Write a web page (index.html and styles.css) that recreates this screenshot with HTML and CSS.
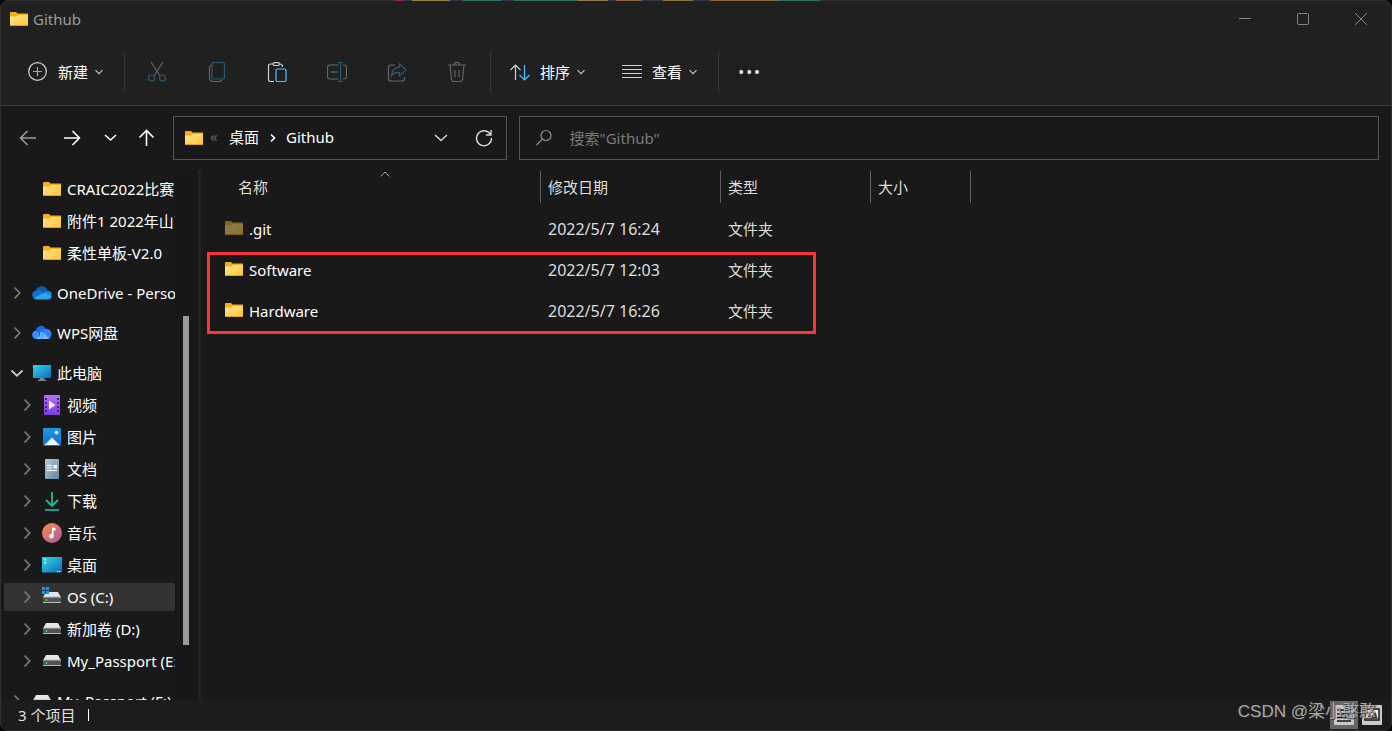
FILE: index.html
```html
<!DOCTYPE html>
<html lang="zh-CN">
<head>
<meta charset="utf-8">
<title>Github</title>
<link rel="stylesheet" href="styles.css">
</head>
<body>
<svg class="defs" aria-hidden="true">
  <defs>
    <linearGradient id="gFolder" x1="0" y1="0" x2="1" y2="1"><stop offset="0" stop-color="#ffe69a"/><stop offset="1" stop-color="#ffc42e"/></linearGradient>
    <linearGradient id="gScreen" x1="0" y1="0" x2="1" y2="1"><stop offset="0" stop-color="#35d6e0"/><stop offset="1" stop-color="#0a6cc0"/></linearGradient>
    <linearGradient id="gVideo" x1="0" y1="0" x2="0" y2="1"><stop offset="0" stop-color="#b473f5"/><stop offset="1" stop-color="#7f3ce0"/></linearGradient>
    <linearGradient id="gPic" x1="0" y1="0" x2="0" y2="1"><stop offset="0" stop-color="#1c9ae6"/><stop offset="1" stop-color="#0d6fc4"/></linearGradient>
    <linearGradient id="gDoc" x1="0" y1="0" x2="1" y2="1"><stop offset="0" stop-color="#b4cbdd"/><stop offset="1" stop-color="#66859f"/></linearGradient>
    <linearGradient id="gDown" x1="0" y1="0" x2="0" y2="1"><stop offset="0" stop-color="#2fc98c"/><stop offset="1" stop-color="#0fa89b"/></linearGradient>
    <linearGradient id="gMusic" x1="0" y1="0" x2="1" y2="1"><stop offset="0" stop-color="#f4904f"/><stop offset=".5" stop-color="#d97070"/><stop offset="1" stop-color="#9a5bb4"/></linearGradient>
    <linearGradient id="gWps" x1="0" y1="0" x2="0" y2="1"><stop offset="0" stop-color="#1668ee"/><stop offset="1" stop-color="#6dbcff"/></linearGradient>
    <symbol id="folder" viewBox="0 0 20 20"><path d="M1 4q0-1 1-1h5l1.500 1.500H19V8H1z" fill="#f9ae13"/><path d="M1 7.500h6.500l1.500-1.500H19v10.500H1z" fill="url(#gFolder)"/><path d="M1 16.500h18" stroke="#e3a21c"/></symbol>
    <symbol id="onedrive" viewBox="0 0 20 20"><path d="M4 8.500A5.800 5.800 0 0 1 15.500 8L11 13 4 10z" fill="#0a5fb5"/><path d="M4.500 7.500Q8 6.500 12 10l-2 6H4.500a4.250 4.250 0 0 1 0-8.500z" fill="#1273cf"/><path d="M11 10.500q2-3 5-2.500a4 4 0 0 1 3.800 4l-4 3z" fill="#168be0"/><path d="M1.500 15l10-4.800q1-.5 2 0l6.300 3.300q-1 3-3.800 3H5q-2 0-3.500-1.500z" fill="#28a8ea"/></symbol>
    <symbol id="wps" viewBox="0 0 20 20"><path d="M4 16A4.300 4.300 0 0 1 3.800 7.500 5.300 5.300 0 0 1 12.500 4L18 16z" fill="#1769f0"/><path d="M4 16A4.200 4.200 0 0 1 3 8q3-.5 4 2.500t-1.500 5.500z" fill="#3a91fa"/><path d="M12.500 6q6-1 7 4.500 0 5.500-5 5.500-2-6-5.500-7.500 1.500-2 3.500-2.500z" fill="#2e83f8"/><path d="M4 16q4-1 4.500-4.500T7.500 5.500Q13 6.500 14.500 12l2.500 4z" fill="url(#gWps)"/><path d="M5 15.500q4.500-1 4-6.500 4 3 5.500 7" fill="none" stroke="#bfe1ff" stroke-width=".7"/></symbol>
    <symbol id="pc" viewBox="0 0 20 20"><path d="M1 2h18v13H1z" fill="url(#gScreen)"/><path d="M8 15h4v1.500h2V18H6v-1.500h2z" fill="#788894"/></symbol>
    <symbol id="video" viewBox="0 0 20 20"><rect x="2" width="16" height="20" rx="1" fill="url(#gVideo)"/><path d="M4 3v15M16 3v15" stroke="#49208b" stroke-width="2" stroke-dasharray="2 2"/><path d="M7 5.500v9l6.500-4.500z" fill="#eee"/></symbol>
    <symbol id="picture" viewBox="0 0 20 20"><rect x="1" y="1" width="18" height="18" rx="1" fill="url(#gPic)"/><path d="M2.500 18L10 10.500 17.500 18z" fill="#f0f7fc"/><circle cx="14.500" cy="5.500" r="1.700" fill="#fff"/></symbol>
    <symbol id="doc" viewBox="0 0 20 20"><rect x="3" width="14" height="20" rx="1" fill="url(#gDoc)"/><path d="M5 6.500h5M5 9h5M5 11.500h10" stroke="#fff"/><rect x="11.500" y="6" width="3.500" height="3.500" fill="#fff"/></symbol>
    <symbol id="down" viewBox="0 0 20 20"><path d="M10 1v13M4 9l6 6 6-6" fill="none" stroke="#22bd8f" stroke-width="1.800"/><path d="M3 18.200h14v1.600H3z" fill="url(#gDown)"/></symbol>
    <symbol id="music" viewBox="0 0 20 20"><circle cx="10" cy="10" r="10" fill="url(#gMusic)"/><path d="M10 13V4.500l3.500.5v2.500l-2-.3V13" fill="#fff"/><circle cx="9.300" cy="13.300" r="2.200" fill="#fff"/></symbol>
    <symbol id="desk" viewBox="0 0 20 20"><path d="M0 2h20v15.500H0z" fill="url(#gScreen)"/><path d="M2.500 4h1.600v1.600H2.500zM2.500 7h1.600v1.600H2.500z" fill="#fff"/><path d="M15 16.500h1.200M17 16.500h1.200" stroke="#fff"/></symbol>
    <symbol id="drive" viewBox="0 0 20 20"><path d="M4 4h12l3 5.500H1z" fill="#e4e6e7"/><path d="M1 9h18v5.500H1z" fill="#505456"/><path d="M1 9h18M1 14.500h18" stroke="#b9bcbd"/><circle cx="4.500" cy="12" r="1" fill="#25e82d"/></symbol>
    <symbol id="osdrive" viewBox="0 0 20 20"><path d="M4 5h12l3 5.500H1z" fill="#e4e6e7"/><path d="M1 10h18v5.500H1z" fill="#505456"/><path d="M1 10h18M1 15.500h18" stroke="#b9bcbd"/><circle cx="4.500" cy="13" r="1" fill="#25e82d"/><path d="M0 0h7v7H0z" fill="#222"/><path d="M0 0h3.200v3.200H0zM3.900 0h3.200v3.200H3.900zM0 3.900h3.200v3.200H0zM3.900 3.900h3.200v3.200H3.900z" fill="#159be8"/></symbol>
    <symbol id="right" viewBox="0 0 20 20"><path d="M7.500 4.500L12.700 10l-5.200 5.500" fill="none" stroke="currentColor" stroke-width="1.800"/></symbol>
    <symbol id="open" viewBox="0 0 20 20"><path d="M4.500 7.500L10 12.700l5.500-5.200" fill="none" stroke="currentColor" stroke-width="1.800"/></symbol>
    <symbol id="small" viewBox="0 0 10 10"><path d="M1.500 3.200L5 6.700 8.500 3.200" fill="none" stroke="#c8c8c8" stroke-width="1.100"/></symbol>
  </defs>
</svg>
<div class="window">
  <header class="titlebar">
    <svg class="icon"><use href="#folder"/></svg>
    <h1 class="title">Github</h1>
    <div class="controls">
      <button class="control" aria-label="最小化"><svg class="ctl" viewBox="0 0 14 14"><path d="M1 6.500h12"/></svg></button>
      <button class="control" aria-label="最大化"><svg class="ctl" viewBox="0 0 14 14"><rect x="1.500" y="1.500" width="11" height="11" rx="1"/></svg></button>
      <button class="control" aria-label="关闭"><svg class="ctl" viewBox="0 0 14 14"><path d="M1 1l12 12M13 1L1 13"/></svg></button>
    </div>
  </header>
  <div class="toolbar">
    <button class="command"><svg class="icon line" viewBox="0 0 20 20"><circle cx="9.500" cy="9.500" r="8.800"/><path class="blue" d="M5 9.500h9M9.500 5v9"/></svg><span>新建</span><svg class="tiny"><use href="#small"/></svg></button>
    <span class="sep"></span>
    <div class="tools">
      <button class="tool" aria-label="剪切"><svg class="icon line dim" viewBox="0 0 20 20"><path d="M4 0l9 14M16 0L7 14"/><circle class="blue" cx="4.500" cy="16" r="3"/><circle class="blue" cx="15.500" cy="16" r="3"/></svg></button>
      <button class="tool" aria-label="复制"><svg class="icon line dim" viewBox="0 0 20 20"><path d="M4.500 3q-2 .5-2 2.500v10q0 4 4 4h5.500q2 0 2.500-1.500"/><rect class="blue" x="5" y=".5" width="12.500" height="16.500" rx="2"/></svg></button>
      <button class="tool" aria-label="粘贴"><svg class="icon line" viewBox="0 0 20 20"><path d="M6 2H3.500Q1.500 2 1.500 4v13.500q0 2 2 2H7M13 2q2.500 0 2.500 3"/><rect x="6" y=".7" width="6.500" height="2.800" rx="1.400"/><rect class="blue" x="9" y="7" width="10" height="12.500" rx="1.500"/></svg></button>
      <button class="tool" aria-label="重命名"><svg class="icon line dim" viewBox="0 0 20 20"><path d="M11 3H3Q.5 3 .5 5.500v9Q.5 17 3 17h8M16 3h1q2.500 0 2.500 2.500v9q0 2.500-2.500 2.500h-1"/><path class="blue" d="M13.500.5v19M10.500.5h5.500M10.500 19.500h5.500"/><path class="blue thick" d="M3.500 10h7"/></svg></button>
      <button class="tool" aria-label="共享"><svg class="icon line dim" viewBox="0 0 20 20"><path d="M8 3H4Q1.500 3 1.500 5.500v11Q1.500 19 4 19h11q2.500 0 2.500-2.500V15"/><path class="blue" d="M12.500 2l6.500 6-6.500 6v-3.500q-5-.5-8 3 .5-7.500 8-8.300z"/></svg></button>
      <button class="tool" aria-label="删除"><svg class="icon line dim" viewBox="0 0 20 20"><path d="M1 3h18M7 3q0-2.500 3-2.500T13 3M3 3l1.500 14.500q.3 2 2.200 2h6.600q1.900 0 2.200-2L17 3M8 8v7M12 8v7"/></svg></button>
    </div>
    <span class="sep"></span>
    <button class="command sort"><svg class="icon line" viewBox="0 0 20 20"><path d="M5.500 18V3M.5 8l5-5 5 5"/><path class="blue" d="M14.500 3v15M9.500 13l5 5 5-5"/></svg><span>排序</span><svg class="tiny"><use href="#small"/></svg></button>
    <button class="command view"><svg class="icon line" viewBox="0 0 20 20"><path d="M0 3.500h20M0 7.500h20M0 11.500h20M0 15.500h20"/></svg><span>查看</span><svg class="tiny"><use href="#small"/></svg></button>
    <span class="sep"></span>
    <button class="more" aria-label="更多"><svg class="icon" viewBox="0 0 20 20"><path d="M2.300 10h.01M10.300 10h.01M18 10h.01" stroke="#fff" stroke-width="4" stroke-linecap="round"/></svg></button>
  </div>
  <div class="location">
    <nav class="history">
      <button class="nav grey" aria-label="后退"><svg class="icon" viewBox="0 0 20 20"><path d="M18 10H3M9.500 3l-7 7 7 7"/></svg></button>
      <button class="nav" aria-label="前进"><svg class="icon" viewBox="0 0 20 20"><path d="M2 10h15M10.500 3l7 7-7 7"/></svg></button>
      <button class="nav narrow" aria-label="最近"><svg class="icon" viewBox="0 0 20 20"><path d="M5 7l5.500 5L16 7"/></svg></button>
      <button class="nav up" aria-label="上移"><svg class="icon" viewBox="0 0 20 20"><path d="M10.500 18V3M3.500 9.500l7-7 7 7"/></svg></button>
    </nav>
    <div class="address">
      <svg class="icon"><use href="#folder"/></svg>
      <span class="back">«</span>
      <a class="crumb" href="#desktop">桌面</a>
      <svg class="tiny chevron" viewBox="0 0 10 10"><path d="M3 1.500L6.500 5 3 8.500"/></svg>
      <a class="crumb" href="#github">Github</a>
      <button class="drop" aria-label="历史"><svg class="icon" viewBox="0 0 20 20"><path d="M4 7l6 5.500L16 7"/></svg></button>
      <button class="drop" aria-label="刷新"><svg class="icon" viewBox="0 0 20 20"><path d="M16.500 6.500A7.500 7.500 0 1 0 17.500 10M17 2v5h-5"/></svg></button>
    </div>
    <label class="search"><svg class="icon" viewBox="0 0 20 20"><circle cx="12" cy="7.500" r="5"/><path d="M8.500 11L2.500 17"/></svg><input class="query" type="text" aria-label="搜索" placeholder='搜索"Github"'></label>
  </div>
  <div class="body">
    <aside class="sidebar">
      <nav class="tree">
        <a class="node child" href="#a"><span class="gap"></span><svg class="icon"><use href="#folder"/></svg><span>CRAIC2022比赛</span></a>
        <a class="node child" href="#b"><span class="gap"></span><svg class="icon"><use href="#folder"/></svg><span>附件1 2022年山东</span></a>
        <a class="node child" href="#c"><span class="gap"></span><svg class="icon"><use href="#folder"/></svg><span>柔性单板-V2.0</span></a>
        <a class="node root" href="#d"><svg class="icon arrow"><use href="#right"/></svg><svg class="icon"><use href="#onedrive"/></svg><span>OneDrive - Personal</span></a>
        <a class="node root" href="#e"><svg class="icon arrow"><use href="#right"/></svg><svg class="icon"><use href="#wps"/></svg><span>WPS网盘</span></a>
        <a class="node root" href="#f"><svg class="icon arrow opened"><use href="#open"/></svg><svg class="icon"><use href="#pc"/></svg><span>此电脑</span></a>
        <a class="node child" href="#g"><svg class="icon arrow"><use href="#right"/></svg><svg class="icon"><use href="#video"/></svg><span>视频</span></a>
        <a class="node child" href="#h"><svg class="icon arrow"><use href="#right"/></svg><svg class="icon"><use href="#picture"/></svg><span>图片</span></a>
        <a class="node child" href="#i"><svg class="icon arrow"><use href="#right"/></svg><svg class="icon"><use href="#doc"/></svg><span>文档</span></a>
        <a class="node child" href="#j"><svg class="icon arrow"><use href="#right"/></svg><svg class="icon"><use href="#down"/></svg><span>下载</span></a>
        <a class="node child" href="#k"><svg class="icon arrow"><use href="#right"/></svg><svg class="icon"><use href="#music"/></svg><span>音乐</span></a>
        <a class="node child" href="#l"><svg class="icon arrow"><use href="#right"/></svg><svg class="icon"><use href="#desk"/></svg><span>桌面</span></a>
        <a class="node child current" href="#m"><svg class="icon arrow"><use href="#right"/></svg><svg class="icon"><use href="#osdrive"/></svg><span>OS (C:)</span></a>
        <a class="node child" href="#n"><svg class="icon arrow"><use href="#right"/></svg><svg class="icon"><use href="#drive"/></svg><span>新加卷 (D:)</span></a>
        <a class="node child" href="#o"><svg class="icon arrow"><use href="#right"/></svg><svg class="icon"><use href="#drive"/></svg><span>My_Passport (E:)</span></a>
        <a class="node root" href="#p"><svg class="icon arrow"><use href="#right"/></svg><svg class="icon"><use href="#drive"/></svg><span>My_Passport (F:)</span></a>
      </nav>
      <div class="track"><div class="thumb"></div></div>
    </aside>
    <main class="content">
      <table class="files">
        <colgroup><col class="c-name"><col class="c-date"><col class="c-type"><col class="c-size"></colgroup>
        <thead><tr>
          <th><div class="head first">名称<svg class="sorted" viewBox="0 0 10 6"><path d="M.5 5.500L5 1l4.500 4.500"/></svg></div></th>
          <th><div class="head">修改日期</div></th><th><div class="head">类型</div></th><th><div class="head">大小</div></th>
        </tr></thead>
        <tbody>
          <tr><td><div class="file"><svg class="icon hidden"><use href="#folder"/></svg>.git</div></td><td class="date">2022/5/7 16:24</td><td>文件夹</td><td></td></tr>
          <tr><td><div class="file"><svg class="icon"><use href="#folder"/></svg>Software</div></td><td class="date">2022/5/7 12:03</td><td>文件夹</td><td></td></tr>
          <tr><td><div class="file"><svg class="icon"><use href="#folder"/></svg>Hardware</div></td><td class="date">2022/5/7 16:26</td><td>文件夹</td><td></td></tr>
        </tbody>
      </table>
      <div class="marker"></div>
    </main>
  </div>
  <footer class="status">
    <span>3 个项目</span><span class="caret"></span>
    <div class="modes">
      <button class="mode chosen" aria-label="详细信息"><svg class="icon" viewBox="0 0 20 20"><rect width="20" height="20" rx="1" fill="#c9c9c9"/><path d="M3 5h14M3 9h14M3 12.500h14M3 16h14" stroke="#151515" stroke-width="1.300"/></svg></button>
      <button class="mode" aria-label="大图标"><svg class="icon" viewBox="0 0 20 20"><rect width="20" height="20" rx="1" fill="#c9c9c9"/><rect x="3" y="4" width="14" height="11" fill="#eee" stroke="#151515" stroke-width="1.500"/><path d="M4 14l4-5 2 2 3-5 3 8z" fill="#555"/></svg></button>
    </div>
    <span class="watermark">CSDN @梁小憨憨</span>
  </footer>
</div>
</body>
</html>
```
FILE: styles.css
```css
* { box-sizing: border-box; }
body { margin: 0; background: #050505; color: #fff; font: 15px/20px "Noto Sans", "Noto Sans CJK SC", sans-serif; }
button { padding: 0; border: 0; background: none; color: inherit; font: inherit; }
a { color: inherit; text-decoration: none; }
svg { display: block; flex: none; }
.defs { position: absolute; width: 0; height: 0; }
.icon { width: 20px; height: 20px; }
.tiny { width: 10px; height: 10px; }

.window { position: relative; display: flex; flex-direction: column; height: 100vh; border: 1px solid #303030; border-radius: 8px; background: #191919; overflow: hidden; }
.window::before { content: ""; position: fixed; top: 0; left: 395px; width: 425px; height: 1px; background: linear-gradient(90deg, #96265a 0 2%, #34344c 2% 4%, #957748 4% 13%, #34344c 13% 16%, #347268 16% 25%, #34344c 25% 28%, #347268 28% 43%, #92774b 43% 50%, #34344c 50% 52%, #8d6841 52% 58%, #353750 58% 63%, #8c7134 63% 70%, #34344c 70% 74%, #8d6841 74% 90%, #347268 90%); }

.titlebar { display: flex; align-items: center; height: 37px; padding: 0 0 2px 8px; background: #202020; }
.title { margin: 0 auto 0 4px; font-size: 15px; font-weight: 400; color: #9b9b9b; }
.controls { display: flex; padding-right: 1px; }
.control { display: grid; place-items: center; width: 58px; height: 35px; }
.ctl { width: 14px; height: 14px; fill: none; stroke: #858585; }

.toolbar { display: flex; align-items: center; height: 68px; padding-left: 27px; border-bottom: 1px solid #3b3b3b; background: #202020; }
.command { display: flex; align-items: center; gap: 10px; height: 40px; }
.command .tiny { margin-left: -4px; }
.sep { width: 1px; height: 40px; margin: 0 2px 0 20px; background: #343434; }
.tools { display: flex; }
.tools + .sep { margin: 0 19px 0 3px; }
.tool { display: grid; place-items: center; width: 60px; height: 40px; }
.view { margin-left: 36px; }
.more { margin-left: 18px; }
.line { fill: none; stroke: #d0d0d0; stroke-width: 1.2px; }
.blue { stroke: #4cc2ff; }
.thick { stroke-width: 2px; }
.dim { stroke: #656565; }
.dim .blue { stroke: #2b5c77; }

.location { display: flex; height: 64px; padding: 10px 12px 10px 5px; }
.history { display: flex; align-items: center; margin-right: 7px; }
.nav { display: grid; place-items: center; width: 44px; height: 44px; fill: none; stroke: #fff; stroke-width: 1.6px; }
.grey { stroke: #9b9b9b; }
.narrow { width: 32px; }
.up { width: 40px; }
.address { display: flex; align-items: center; flex: 321 1 0; min-width: 0; height: 44px; margin-right: 12px; padding: 0 0 0 10px; border: 1px solid #565656; }
.back { width: 10px; margin: 0 9px 0 6px; padding-bottom: 4px; color: #666; }
.chevron { margin: 0 8px 0 9px; fill: none; stroke: #fff; stroke-width: 1.6px; }
.crumb { padding-bottom: 2px; }
.crumb + .chevron + .crumb { margin-right: auto; }
.drop { display: grid; place-items: center; width: 43px; height: 42px; fill: none; stroke: #d8d8d8; stroke-width: 1.4px; }
.search { display: flex; align-items: center; flex: 829 1 0; min-width: 0; height: 44px; padding: 0 14px; gap: 16px; border: 1px solid #565656; fill: none; stroke: #8c8c8c; stroke-width: 1.2px; }
.query { flex: 1; min-width: 0; padding: 0; border: 0; outline: 0; background: none; color: #fff; font: inherit; }
.query::placeholder { color: #7b7b7b; opacity: 1; }

.body { display: flex; flex: 1; min-height: 0; }
.sidebar { display: flex; flex: none; width: 200px; padding-left: 3px; border-right: 3px solid #222; overflow: hidden; }
.tree { display: flex; flex-direction: column; gap: 4px; width: 171px; padding-top: 5px; overflow: hidden; }
.node { display: flex; flex: none; align-items: center; gap: 5px; height: 28px; white-space: nowrap; }
.child { padding-left: 13px; }
.root { margin-top: 8px; padding-left: 3px; }
.gap { flex: none; width: 20px; }
.arrow { color: #777; }
.opened { color: #c8c8c8; }
.current { background: #333; border-radius: 2px; }
.track { flex: 1; padding: 146px 0 0 8px; background: #171717; }
.thumb { width: 6px; height: 329px; background: #999; }

.content { position: relative; flex: 1; min-width: 0; }
.files { width: 770px; table-layout: fixed; border-collapse: collapse; }
.c-name { width: 340px; }
.c-date { width: 180px; }
.c-type { width: 150px; }
.c-size { width: 100px; }
.files th { height: 38px; padding: 1px 0 0; font-weight: 400; text-align: left; vertical-align: top; }
.head { position: relative; height: 32px; padding: 6px 7px; border-right: 1px solid #606060; color: #dedede; }
.first { padding-left: 37px; }
.sorted { position: absolute; top: 0; right: 150px; width: 10px; height: 6px; fill: none; stroke: #a8a8a8; }
.files td { height: 41px; padding: 0 7px; color: #dedede; }
.files td:first-child { padding-left: 23px; color: #fff; }
.files .date { font-size: 16px; }
.file { display: flex; align-items: center; gap: 5px; }
.file .icon { margin-bottom: 2px; }
.hidden { opacity: .5; }
.marker { position: absolute; top: 82px; left: 6px; width: 609px; height: 82px; border: 3px solid #fa3535; }

.status { position: relative; display: flex; align-items: center; flex: none; height: 30px; padding: 0 5px 0 17px; background: #1c1c1c; color: #e0e0e0; }
.caret { width: 1px; height: 12px; margin-left: 13px; background: #fff; }
.modes { display: flex; margin-left: auto; }
.mode { display: grid; place-items: center; width: 28px; height: 28px; }
.chosen { background: #666; }
.watermark { position: absolute; right: 15px; bottom: 8px; color: #a9a9a9; font: 17px/20px "Liberation Sans", "Noto Sans CJK SC", sans-serif; text-shadow: 1px 1px 1px #333; }
```
